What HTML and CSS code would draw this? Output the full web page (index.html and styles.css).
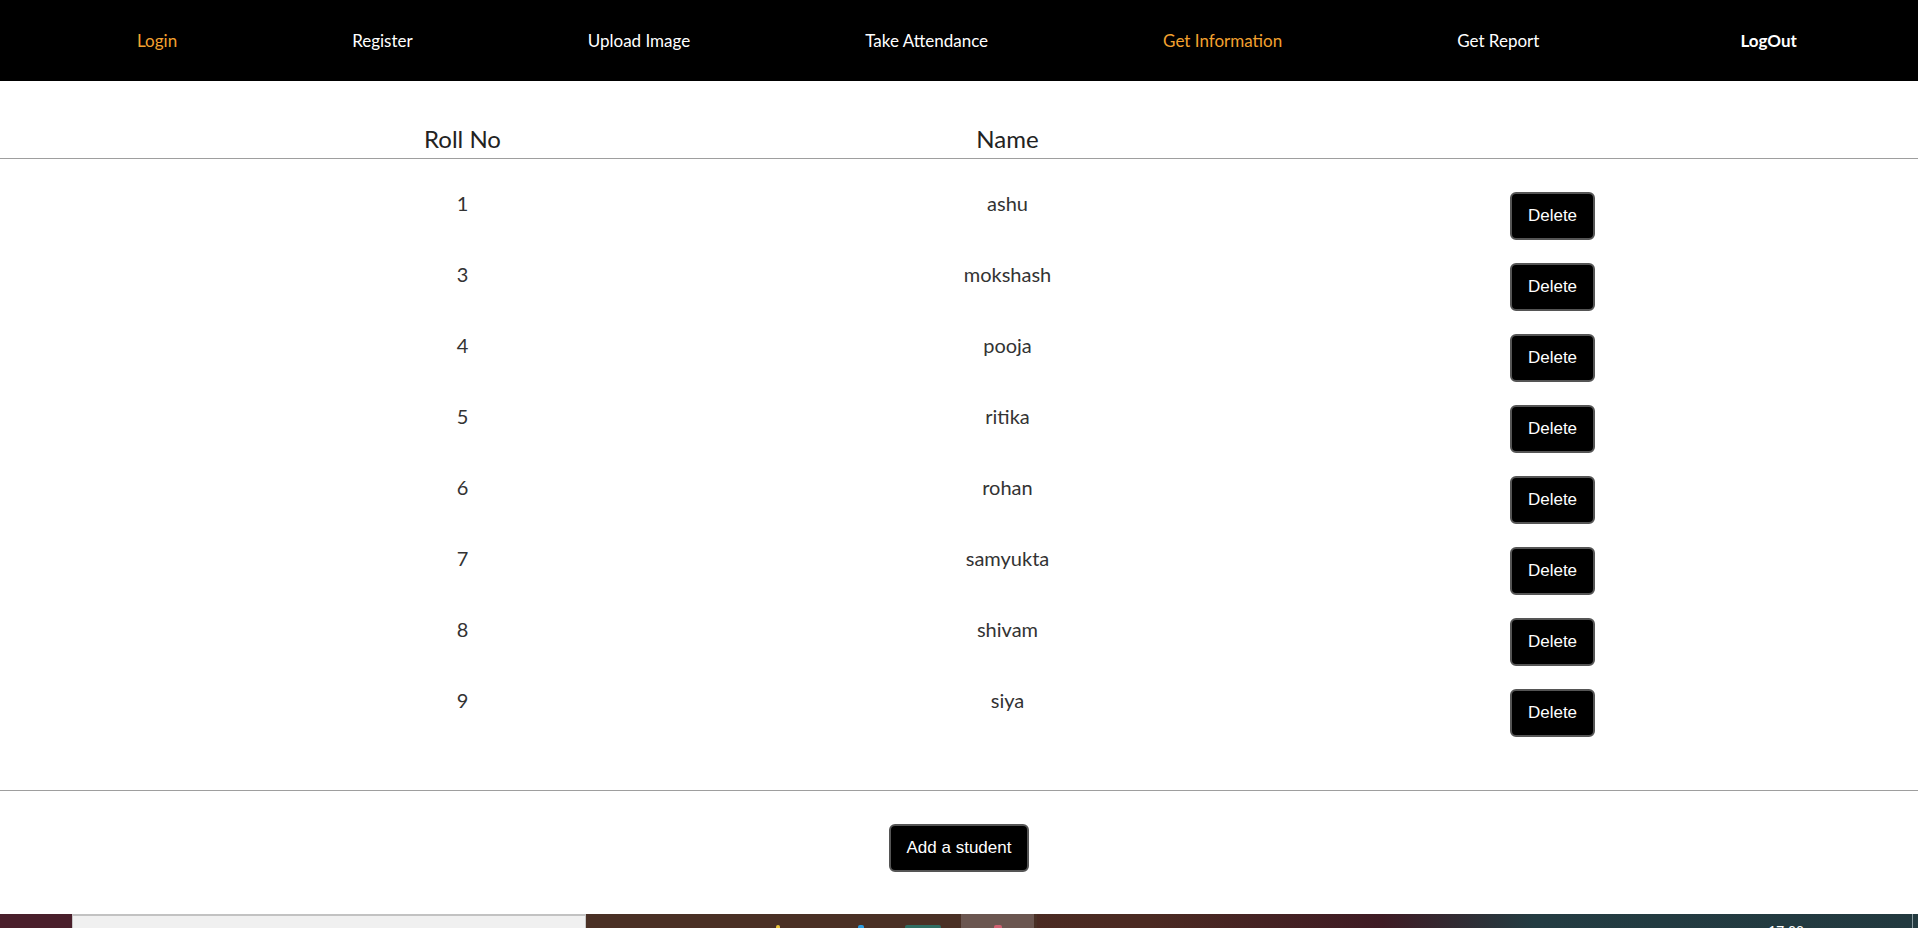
FILE: index.html
```html
<!DOCTYPE html>
<html lang="en">
<head>
<meta charset="utf-8">
<title>Get Information</title>
<link rel="stylesheet" href="styles.css">
</head>
<body>
<div class="page">
  <nav class="nav">
    <a class="nav-link nav-accent" href="#">Login</a>
    <a class="nav-link" href="#">Register</a>
    <a class="nav-link" href="#">Upload Image</a>
    <a class="nav-link" href="#">Take Attendance</a>
    <a class="nav-link nav-accent" href="#">Get Information</a>
    <a class="nav-link" href="#">Get Report</a>
    <a class="nav-link nav-logout" href="#">LogOut</a>
  </nav>

  <div class="table-head">
    <div class="th">Roll No</div>
    <div class="th">Name</div>
    <div class="th"></div>
  </div>

  <div class="table-body">
    <div class="row"><div class="td">1</div><div class="td">ashu</div><div class="td-btn"><button class="btn">Delete</button></div></div>
    <div class="row"><div class="td">3</div><div class="td">mokshash</div><div class="td-btn"><button class="btn">Delete</button></div></div>
    <div class="row"><div class="td">4</div><div class="td">pooja</div><div class="td-btn"><button class="btn">Delete</button></div></div>
    <div class="row"><div class="td">5</div><div class="td">ritika</div><div class="td-btn"><button class="btn">Delete</button></div></div>
    <div class="row"><div class="td">6</div><div class="td">rohan</div><div class="td-btn"><button class="btn">Delete</button></div></div>
    <div class="row"><div class="td">7</div><div class="td">samyukta</div><div class="td-btn"><button class="btn">Delete</button></div></div>
    <div class="row"><div class="td">8</div><div class="td">shivam</div><div class="td-btn"><button class="btn">Delete</button></div></div>
    <div class="row"><div class="td">9</div><div class="td">siya</div><div class="td-btn"><button class="btn">Delete</button></div></div>
  </div>

  <div class="footer">
    <button class="btn">Add a student</button>
  </div>

  <div class="taskbar">
    <div class="tb-start"></div>
    <div class="tb-search"></div>
    <div class="tb-apps">
      <span class="tb-icon tb-yellow"></span>
      <span class="tb-icon tb-blue"></span>
      <span class="tb-icon tb-green"></span>
      <span class="tb-active"><span class="tb-icon tb-red"></span></span>
    </div>
    <div class="tb-tray"><span class="tb-clock">17:00</span></div>
    <div class="tb-edge"></div>
  </div>
</div>
</body>
</html>
```

FILE: styles.css
```css
* { box-sizing: border-box; }

html, body {
  margin: 0;
  padding: 0;
  background: #fff;
}

body {
  font-family: Lato, "Liberation Sans", sans-serif;
  color: #333;
}

.page {
  height: 928px;
  display: flex;
  flex-direction: column;
  overflow: hidden;
}

/* NAV */
.nav {
  height: 81px;
  flex: none;
  background: #000;
  display: flex;
  align-items: center;
  padding-left: 137px;
  gap: 175px;
}

.nav-link {
  color: #fff;
  text-decoration: none;
  font-size: 17px;
  line-height: 20px;
}

.nav-accent { color: #f3a12f; }

.nav-logout {
  font-weight: 700;
  margin-left: 26px;
}

/* TABLE */
.table-head,
.row {
  display: grid;
  grid-template-columns: 545px 545px 545px;
  padding-left: 190px;
}

.table-head {
  flex: none;
  padding-top: 43px;
  padding-bottom: 5px;
  border-bottom: 1px solid #9e9e9e;
}

.th {
  text-align: center;
  font-size: 24px;
  line-height: 29px;
  color: #222;
}

.table-body {
  flex: none;
  padding-top: 33px;
  padding-bottom: 30px;
  border-bottom: 1px solid #9e9e9e;
}

.row {
  height: 71px;
  align-items: start;
}

.td {
  text-align: center;
  font-size: 20px;
  line-height: 22px;
  color: #333;
}

.td-btn {
  display: flex;
  justify-content: center;
}

.btn {
  background: #000;
  color: #fff;
  border: 2px solid #555;
  border-radius: 6px;
  font-family: "Liberation Sans", Arial, sans-serif;
  font-size: 17px;
  line-height: 18px;
  padding: 13px 16px;
  cursor: pointer;
}

/* FOOTER */
.footer {
  flex: none;
  display: flex;
  justify-content: center;
  padding-top: 33px;
}

/* TASKBAR */
.taskbar {
  margin-top: auto;
  height: 14px;
  flex: none;
  display: flex;
  background: linear-gradient(90deg, #4a2e24 0%, #4b2a22 60%, #3f1b24 72%, #233c42 80%, #22393f 100%);
}

.tb-start {
  width: 72px;
  background: #4a1f2b;
}

.tb-search {
  width: 514px;
  background: #f0f0f0;
  border-top: 2px solid #c2c2c2;
  border-left: 1px solid #c8c8c8;
  border-right: 1px solid #c8c8c8;
}

.tb-apps {
  width: 451px;
  display: flex;
  align-items: flex-end;
  background: #4a3025;
}

.tb-icon {
  display: block;
  height: 3px;
  border-radius: 2px 2px 0 0;
}

.tb-yellow { width: 4px; background: #e8c23a; margin-left: 190px; }
.tb-blue { width: 6px; background: #2a9be0; margin-left: 78px; }
.tb-green { width: 36px; background: #2f6d62; margin-left: 41px; }

.tb-active {
  display: flex;
  align-items: flex-end;
  justify-content: center;
  width: 73px;
  height: 100%;
  margin-left: 20px;
  background: #6b5650;
}

.tb-red { width: 8px; background: #d06070; }

.tb-tray {
  flex: 1;
  display: flex;
  justify-content: flex-end;
  padding-right: 108px;
  overflow: hidden;
}

.tb-clock {
  color: #fff;
  font-family: "Noto Sans", sans-serif;
  font-size: 14px;
  line-height: 14px;
  padding-top: 10px;
}

.tb-edge {
  width: 6px;
  border-left: 1px solid #8a9aa0;
  background: #233a40;
}
```
